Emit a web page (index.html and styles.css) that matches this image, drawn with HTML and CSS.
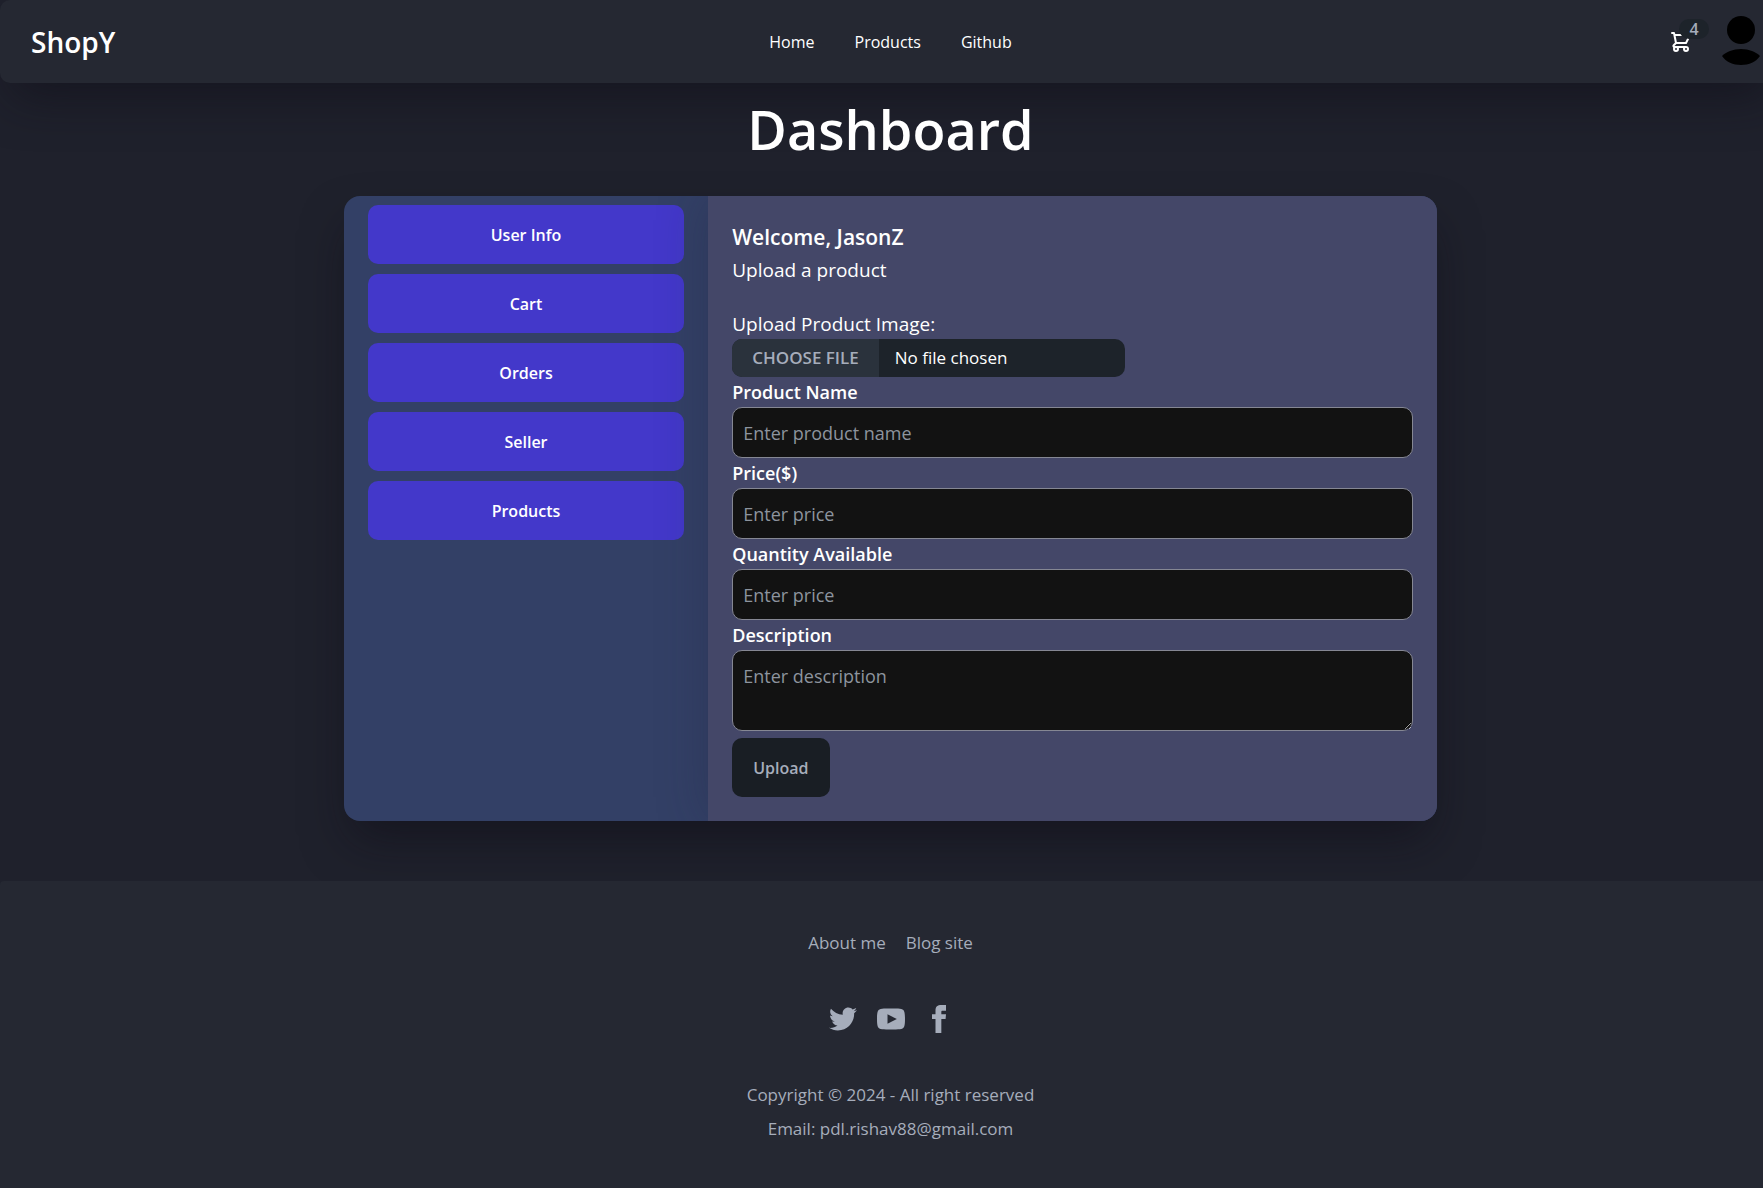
FILE: index.html
```html
<!DOCTYPE html>
<html lang="en">
<head>
<meta charset="utf-8">
<meta name="viewport" content="width=device-width, initial-scale=1">
<title>ShopY - Dashboard</title>
<link rel="stylesheet" href="styles.css">
</head>
<body>
<div class="site">
<header class="navbar">
  <a class="brand" href="#">ShopY</a>
  <nav class="nav-links">
    <a href="#">Home</a>
    <a href="#">Products</a>
    <a href="#">Github</a>
  </nav>
  <div class="nav-actions">
    <button class="cart" type="button" aria-label="Cart">
      <svg width="24" height="24" viewBox="0 0 24 24" fill="none" stroke="currentColor" stroke-width="2" stroke-linecap="round" stroke-linejoin="round"><path d="M3 3h2l.4 2M7 13h10l4-8H5.400M7 13L5.400 5M7 13l-2.293 2.293c-.63.63-.184 1.707.707 1.707H17m0 0a2 2 0 100 4 2 2 0 000-4zm-8 2a2 2 0 11-4 0 2 2 0 014 0z"/></svg>
      <span class="badge">4</span>
    </button>
    <button class="avatar" type="button" aria-label="Account">
      <svg width="38" height="52" viewBox="0 0 38 52"><circle cx="19" cy="14" r="14"/><path d="M0 40C4 36 11 33 19 33s15 3 19 7c-4 6-11 9-19 9S4 46 0 40z"/></svg>
    </button>
  </div>
</header>
<main class="page">
  <h1 class="title">Dashboard</h1>
  <div class="card">
    <aside class="sidebar">
      <button class="menu-btn" type="button">User Info</button>
      <button class="menu-btn" type="button">Cart</button>
      <button class="menu-btn" type="button">Orders</button>
      <button class="menu-btn" type="button">Seller</button>
      <button class="menu-btn" type="button">Products</button>
    </aside>
    <section class="content">
      <h2 class="welcome">Welcome, JasonZ</h2>
      <p class="subtitle">Upload a product</p>
      <form class="form">
        <label class="file-label" for="image">Upload Product Image:</label>
        <input class="file" id="image" type="file">
        <label class="label" for="name">Product Name</label>
        <input class="field" id="name" type="text" placeholder="Enter product name">
        <label class="label" for="price">Price($)</label>
        <input class="field" id="price" type="text" placeholder="Enter price">
        <label class="label" for="quantity">Quantity Available</label>
        <input class="field" id="quantity" type="text" placeholder="Enter price">
        <label class="label" for="description">Description</label>
        <textarea class="field area" id="description" placeholder="Enter description"></textarea>
        <button class="upload" type="button">Upload</button>
      </form>
    </section>
  </div>
</main>
<footer class="footer">
  <nav class="footer-links">
    <a href="#">About me</a>
    <a href="#">Blog site</a>
  </nav>
  <div class="social">
    <a href="#" aria-label="Twitter"><svg width="28" height="28" viewBox="0 0 24 24"><path d="M24 4.557c-.883.392-1.832.656-2.828.775 1.017-.609 1.798-1.574 2.165-2.724-.951.564-2.005.974-3.127 1.195-.897-.957-2.178-1.555-3.594-1.555-3.179 0-5.515 2.966-4.797 6.045-4.091-.205-7.719-2.165-10.148-5.144-1.290 2.213-.669 5.108 1.523 6.574-.806-.026-1.566-.247-2.229-.616-.054 2.281 1.581 4.415 3.949 4.890-.693.188-1.452.232-2.224.084.626 1.956 2.444 3.379 4.600 3.419-2.070 1.623-4.678 2.348-7.290 2.040 2.179 1.397 4.768 2.212 7.548 2.212 9.142 0 14.307-7.721 13.995-14.646.962-.695 1.797-1.562 2.457-2.549z"/></svg></a>
    <a href="#" aria-label="YouTube"><svg width="28" height="28" viewBox="0 0 24 24"><path d="M19.615 3.184c-3.604-.246-11.631-.245-15.230 0-3.897.266-4.356 2.620-4.385 8.816.029 6.185.484 8.549 4.385 8.816 3.600.245 11.626.246 15.230 0 3.897-.266 4.356-2.620 4.385-8.816-.029-6.185-.484-8.549-4.385-8.816zm-10.615 12.816v-8l8 3.993-8 4.007z"/></svg></a>
    <a href="#" aria-label="Facebook"><svg width="28" height="28" viewBox="0 0 24 24"><path d="M9 8h-3v4h3v12h5v-12h3.642l.358-4h-4v-1.667c0-.955.192-1.333 1.115-1.333h2.885v-5h-3.808c-3.596 0-5.192 1.583-5.192 4.615v3.385z"/></svg></a>
  </div>
  <div class="legal">
    <p>Copyright © 2024 - All right reserved</p>
    <p>Email: pdl.rishav88@gmail.com</p>
  </div>
</footer>
</div>
</body>
</html>
```
FILE: styles.css
```css
* { box-sizing: border-box; }

body {
  margin: 0;
  overflow-x: hidden;
  background: #1f212c;
  color: #fff;
  font-family: "Open Sans", "Noto Sans", sans-serif;
  font-size: 16px;
}

a { color: inherit; text-decoration: none; }
h1, h2, p { margin: 0; }
button { border: 0; padding: 0; background: none; color: inherit; font: inherit; cursor: pointer; }

/* The layout bleeds past the right edge of the window. */
.site {
  display: flex;
  flex-direction: column;
  min-height: 100vh;
  margin-right: -18px;
}

.navbar {
  display: grid;
  grid-template-columns: 1fr auto 1fr;
  align-items: center;
  height: 83px;
  padding: 0 21px;
  border-radius: 10px;
  background: #252832;
  box-shadow: 0 24px 48px -12px rgba(15, 13, 24, 0.6);
}
.brand { padding-left: 10px; font-size: 28px; font-weight: 600; }
.nav-links { display: flex; gap: 40px; }
.nav-actions { display: flex; justify-content: flex-end; align-items: center; gap: 29px; }
.cart { position: relative; display: flex; }
.badge {
  position: absolute;
  top: -11px;
  right: -16px;
  width: 30px;
  height: 20px;
  border-radius: 10px;
  background: #1d232a;
  color: #a6adbb;
  font-weight: 600;
  line-height: 20px;
}
.avatar { display: flex; }
.avatar svg { fill: #000; }

.page { flex: 1; padding-bottom: 59px; }
.title {
  padding: 6px 0 27px;
  font-size: 54px;
  font-weight: 600;
  line-height: 80px;
  text-align: center;
}
.card {
  display: grid;
  grid-template-columns: 1fr 2fr;
  width: 61.4%;
  margin: 0 auto;
  border-radius: 16px;
  overflow: hidden;
  background: #334066;
  box-shadow: 0 24px 48px -8px rgba(12, 10, 20, 0.5);
}
.sidebar { display: flex; flex-direction: column; gap: 10px; padding: 9px 24px; }
.menu-btn {
  height: 59px;
  border-radius: 10px;
  background: #4338ca;
  font-weight: 600;
}
.content {
  padding: 24px;
  background: #444768;
  box-shadow: 0 0 48px rgba(31, 33, 60, 0.3);
}
.welcome { font-size: 21px; font-weight: 600; line-height: 35px; }
.subtitle { margin-bottom: 24px; font-size: 19px; line-height: 30px; }
.form { display: flex; flex-direction: column; align-items: flex-start; font-size: 19px; line-height: 30px; }
.label { font-size: 18px; font-weight: 600; }
.file {
  width: 393px;
  max-width: 100%;
  height: 38px;
  border-radius: 10px;
  overflow: hidden;
  background: #1d232a;
  color: #fff;
  font: 17px/38px "Open Sans", "Noto Sans", sans-serif;
}
.file::file-selector-button {
  height: 38px;
  margin: 0 16px 0 0;
  padding: 0 20px;
  border: 0;
  background: #2a323c;
  color: #a6adbb;
  font: 600 17px/38px "Open Sans", "Noto Sans", sans-serif;
  text-transform: uppercase;
}
.field {
  width: 100%;
  height: 51px;
  padding: 10px;
  border: 1px solid #858793;
  border-radius: 10px;
  background: #121212;
  color: #fff;
  font: 18px/30px "Open Sans", "Noto Sans", sans-serif;
}
.field::placeholder { color: #8d949e; opacity: 1; }
.area { height: 81px; resize: vertical; }
.upload {
  height: 59px;
  margin-top: 7px;
  padding: 0 21px;
  border-radius: 10px;
  background: #191e24;
  color: #a6adbb;
  font-size: 16px;
  font-weight: 600;
}

.footer {
  display: flex;
  flex-direction: column;
  align-items: center;
  gap: 45px;
  padding: 45px 20px 42px;
  border-radius: 4px 4px 0 0;
  background: #252832;
  color: #a6adbb;
  font-size: 17px;
  line-height: 34px;
  text-align: center;
}
.footer-links, .social { display: flex; gap: 20px; }
.social a { display: flex; }
.social svg { fill: currentColor; }
```
